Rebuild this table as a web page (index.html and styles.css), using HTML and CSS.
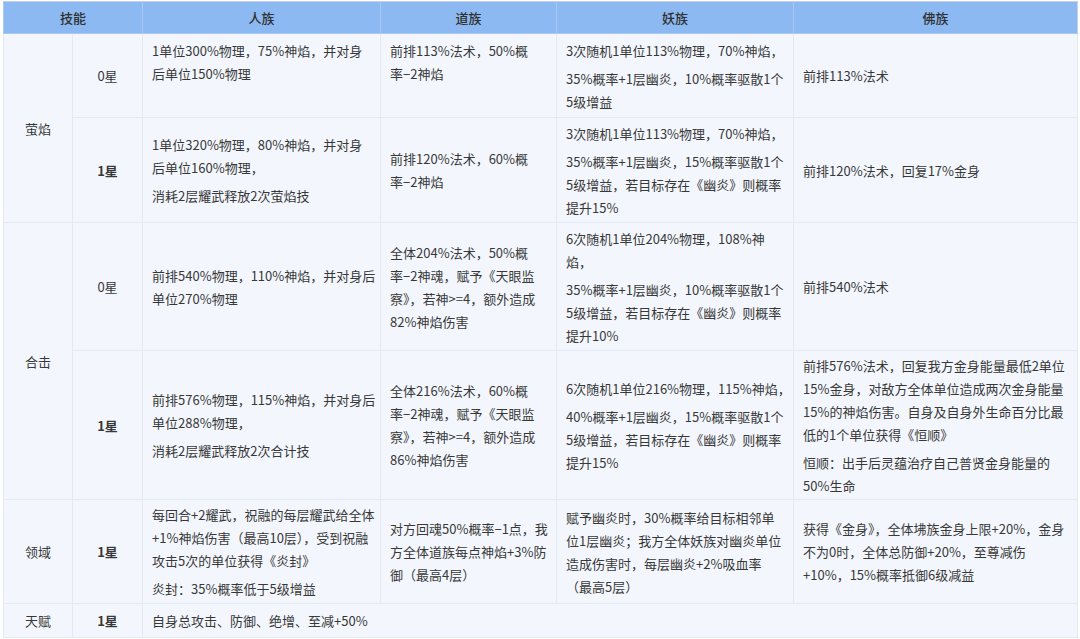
FILE: index.html
```html
<!DOCTYPE html>
<html lang="zh">
<head>
<meta charset="utf-8">
<link rel="stylesheet" href="styles.css">
</head>
<body>
<div class="wrap">
<table class="skills">
  <colgroup>
    <col class="c-skill"><col class="c-star"><col class="c-ren"><col class="c-dao"><col class="c-yao"><col class="c-fo">
  </colgroup>
  <thead>
    <tr class="r-head">
      <th colspan="2">技能</th>
      <th>人族</th>
      <th>道族</th>
      <th>妖族</th>
      <th>佛族</th>
    </tr>
  </thead>
  <tbody>
    <tr class="r1">
      <td rowspan="2" class="name">萤焰</td>
      <td class="star">0星</td>
      <td><p>1单位300%物理，75%神焰，并对身<br>后单位150%物理</p><p>&nbsp;</p></td>
      <td><p>前排113%法术，50%概<br>率−2神焰</p><p>&nbsp;</p></td>
      <td><p>3次随机1单位113%物理，70%神焰，</p><p>35%概率+1层幽炎，10%概率驱散1个<br>5级增益</p></td>
      <td><p>前排113%法术</p></td>
    </tr>
    <tr class="r2">
      <td class="star bold">1星</td>
      <td><p>1单位320%物理，80%神焰，并对身<br>后单位160%物理，</p><p>消耗2层耀武释放2次萤焰技</p></td>
      <td><p>前排120%法术，60%概<br>率−2神焰</p></td>
      <td><p>3次随机1单位113%物理，70%神焰，</p><p>35%概率+1层幽炎，15%概率驱散1个<br>5级增益，若目标存在《幽炎》则概率<br>提升15%</p></td>
      <td><p>前排120%法术，回复17%金身</p></td>
    </tr>
    <tr class="r3">
      <td rowspan="2" class="name">合击</td>
      <td class="star">0星</td>
      <td><p>前排540%物理，110%神焰，并对身后<br>单位270%物理</p></td>
      <td><p>全体204%法术，50%概<br>率−2神魂，赋予《天眼监<br>察》，若神&gt;=4，额外造成<br>82%神焰伤害</p></td>
      <td><p>6次随机1单位204%物理，108%神<br>焰，</p><p>35%概率+1层幽炎，10%概率驱散1个<br>5级增益，若目标存在《幽炎》则概率<br>提升10%</p></td>
      <td><p>前排540%法术</p></td>
    </tr>
    <tr class="r4">
      <td class="star bold">1星</td>
      <td><p>前排576%物理，115%神焰，并对身后<br>单位288%物理，</p><p>消耗2层耀武释放2次合计技</p></td>
      <td><p>全体216%法术，60%概<br>率−2神魂，赋予《天眼监<br>察》，若神&gt;=4，额外造成<br>86%神焰伤害</p></td>
      <td><p>6次随机1单位216%物理，115%神焰，</p><p>40%概率+1层幽炎，15%概率驱散1个<br>5级增益，若目标存在《幽炎》则概率<br>提升15%</p></td>
      <td><p>前排576%法术，回复我方金身能量最低2单位<br>15%金身，对敌方全体单位造成两次金身能量<br>15%的神焰伤害。自身及自身外生命百分比最<br>低的1个单位获得《恒顺》</p><p>恒顺：出手后灵蕴治疗自己普贤金身能量的<br>50%生命</p></td>
    </tr>
    <tr class="r5">
      <td class="name">领域</td>
      <td class="star bold">1星</td>
      <td><p>每回合+2耀武，祝融的每层耀武给全体<br>+1%神焰伤害（最高10层），受到祝融<br>攻击5次的单位获得《炎封》</p><p>炎封：35%概率低于5级增益</p></td>
      <td><p>对方回魂50%概率−1点，我<br>方全体道族每点神焰+3%防<br>御（最高4层）</p></td>
      <td><p>赋予幽炎时，30%概率给目标相邻单<br>位1层幽炎；我方全体妖族对幽炎单位<br>造成伤害时，每层幽炎+2%吸血率<br>（最高5层）</p></td>
      <td><p>获得《金身》，全体坲族金身上限+20%，金身<br>不为0时，全体总防御+20%，至尊减伤<br>+10%，15%概率抵御6级减益</p></td>
    </tr>
    <tr class="r6">
      <td class="name">天赋</td>
      <td class="star bold">1星</td>
      <td colspan="4"><p>自身总攻击、防御、绝增、至减+50%</p></td>
    </tr>
  </tbody>
</table>
</div>
</body>
</html>
```

FILE: styles.css
```css
html, body {
  margin: 0;
  padding: 0;
  background: #ffffff;
}
.wrap {
  padding: 1px 3px 0 3px;
}
.skills {
  width: 1074px;
  table-layout: fixed;
  border-collapse: collapse;
  border: 1px solid #c6d0de;
  font-family: "PingFang SC", "Noto Sans CJK SC", "Noto Sans", sans-serif;
  font-size: 13px;
  color: #383838;
  background: #f3f7fd;
}
.c-skill { width: 69px; }
.c-star { width: 70px; }
.c-ren { width: 238px; }
.c-dao { width: 176px; }
.c-yao { width: 237px; }
.c-fo { width: 284px; }

.skills th {
  background: #8cb9f1;
  color: #2f2f2f;
  font-weight: 500;
  height: 31px;
  padding: 0;
  text-align: center;
  border-left: 1px solid #a9c9f2;
  border-bottom: 1px solid #a9c9f2;
}
.skills td {
  border: 1px solid #e2eaf5;
  padding: 0 8px 0 9px;
  vertical-align: middle;
  line-height: 23px;
  text-align: left;
}
.skills p {
  margin: 0;
  white-space: nowrap;
}
.skills p + p {
  margin-top: 5px;
}
.skills td.name,
.skills td.star {
  text-align: center;
  padding: 0;
}
.skills td.bold {
  font-weight: 700;
}
.r1 td { height: 83px; }
.r2 td { height: 104px; }
.r3 td { height: 127px; }
.r4 td { height: 148px; }
.r5 td { height: 103px; }
.r6 td { height: 33px; }
```
